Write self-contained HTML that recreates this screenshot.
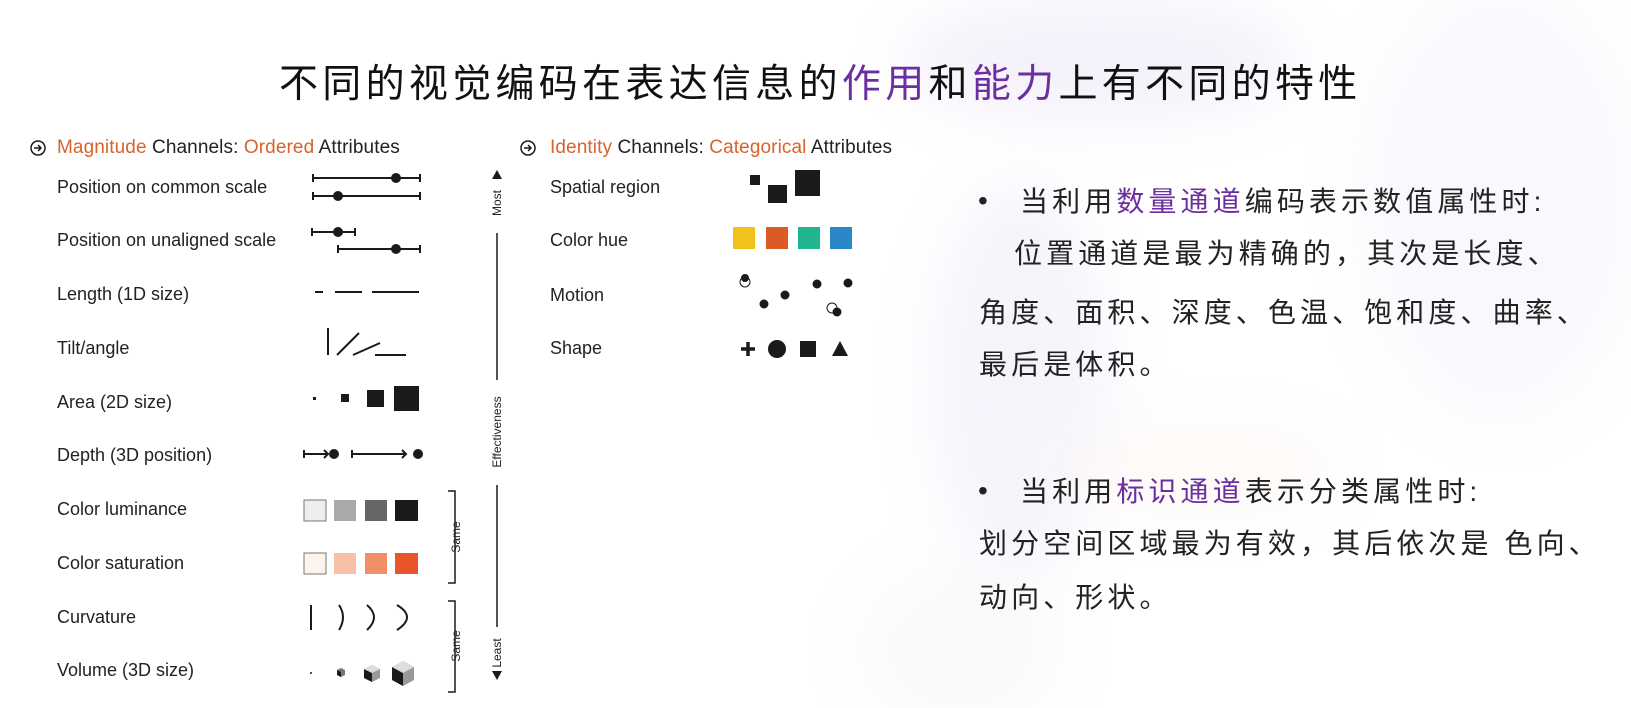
<!DOCTYPE html>
<html><head><meta charset="utf-8"><style>
html,body{margin:0;padding:0}
body{width:1631px;height:708px;position:relative;overflow:hidden;background:#fff;font-family:"Liberation Sans","Noto Sans CJK SC",sans-serif}
.bg{position:absolute;left:0;top:0;width:1631px;height:708px}
.t{position:absolute;white-space:nowrap}
.title{left:279px;top:53px;font-size:39px;color:#111;letter-spacing:4.3px}
.p{color:#6b2fa0}
.o{color:#d9622b}
.lab{font-size:18px;color:#222;left:57px}
.hd{font-size:19px;color:#222;letter-spacing:0.1px}
.cn{font-size:28px;color:#222;letter-spacing:4.1px}
</style></head><body>
<svg class="bg" viewBox="0 0 1631 708">
<defs>
<filter id="b" x="-50%" y="-50%" width="200%" height="200%"><feGaussianBlur stdDeviation="30"/></filter>
</defs>
<g filter="url(#b)" opacity="0.15">
<ellipse cx="1100" cy="60" rx="200" ry="60" fill="#b9a3e0"/>
<ellipse cx="1020" cy="380" rx="90" ry="200" fill="#c8b6ea"/>
<ellipse cx="1500" cy="200" rx="140" ry="220" fill="#ddd4f0"/>
<ellipse cx="1200" cy="470" rx="140" ry="40" fill="#f3d8c8"/>
<ellipse cx="960" cy="650" rx="100" ry="80" fill="#ddd"/>
</g>
<g stroke="#1a1a1a" stroke-width="2" fill="#1a1a1a">
<circle cx="38" cy="148" r="7" fill="none" stroke-width="1.5"/>
<path d="M34 148h7M38 145l3 3-3 3" fill="none" stroke-width="1.5"/>
<circle cx="528" cy="148" r="7" fill="none" stroke-width="1.5"/>
<path d="M524 148h7M528 145l3 3-3 3" fill="none" stroke-width="1.5"/>
<path d="M313 178h107M313 174v8M420 174v8M313 196h107M313 192v8M420 192v8M312 232h43M312 228v8M355 228v8M338 249h82M338 245v8M420 245v8" fill="none"/>
<circle cx="396" cy="178" r="4"/><circle cx="338" cy="196" r="4"/><circle cx="338" cy="232" r="4"/><circle cx="396" cy="249" r="4"/>
<path d="M315 292h8M335 292h27M372 292h47" fill="none"/>
<path d="M328 328v27M337 355l22-22M353 355l27-12M375 355h31" fill="none"/>
<rect x="313" y="397" width="3" height="3" stroke="none"/>
<rect x="341" y="394" width="8" height="8" stroke="none"/>
<rect x="367" y="390" width="17" height="17" stroke="none"/>
<rect x="394" y="386" width="25" height="25" stroke="none"/>
<path d="M304 450v8M304 454h24M324 450l4 4-4 4M352 450v8M352 454h54M402 450l4 4-4 4" fill="none"/>
<circle cx="334" cy="454" r="4"/><circle cx="418" cy="454" r="4"/>
<rect x="304" y="500" width="22" height="21" fill="#eeeeee" stroke="#777" stroke-width="1"/>
<rect x="334" y="500" width="22" height="21" fill="#aaaaaa" stroke="none"/>
<rect x="365" y="500" width="22" height="21" fill="#666" stroke="none"/>
<rect x="395" y="500" width="23" height="21" fill="#1a1a1a" stroke="none"/>
<rect x="304" y="553" width="22" height="21" fill="#fdf3ee" stroke="#777" stroke-width="1"/>
<rect x="334" y="553" width="22" height="21" fill="#f8c0a6" stroke="none"/>
<rect x="365" y="553" width="22" height="21" fill="#f08f68" stroke="none"/>
<rect x="395" y="553" width="23" height="21" fill="#e8552a" stroke="none"/>
<path d="M311 605v25M339 605q8 12 0 25M367 605q14 12 0 25M397 605q20 12 0 25" fill="none"/>
<rect x="310" y="672" width="2" height="2" stroke="none" fill="#555"/>
<path d="M337 670l4-2 4 2v5l-4 2-4-2z" stroke="none" fill="#777"/><path d="M337 670l4 2v5l-4-2z" stroke="none"/>
<path d="M364 669l8-4 8 4v9l-8 4-8-4z" stroke="none" fill="#999"/><path d="M364 669l8 4v9l-8-4z" stroke="none"/><path d="M364 669l8-4 8 4-8 4z" stroke="none" fill="#ddd"/>
<path d="M392 667l11-6 11 6v13l-11 6-11-6z" stroke="none" fill="#999"/><path d="M392 667l11 6v13l-11-6z" stroke="none"/><path d="M392 667l11-6 11 6-11 6z" stroke="none" fill="#ddd"/>
<path d="M448 491h7v92h-7M448 601h7v91h-7" fill="none" stroke-width="1.5"/>
<path d="M497 170l-5 9h10z" stroke="none"/>
<path d="M497 680l-5-9h10z" stroke="none"/>
<path d="M497 233v147M497 485v142" fill="none" stroke-width="1.5"/>
<rect x="750" y="175" width="10" height="10" stroke="none"/>
<rect x="768" y="185" width="19" height="18" stroke="none"/>
<rect x="795" y="170" width="25" height="26" stroke="none"/>
<rect x="733" y="227" width="22" height="22" fill="#f2c21a" stroke="none"/>
<rect x="766" y="227" width="22" height="22" fill="#dc5a24" stroke="none"/>
<rect x="798" y="227" width="22" height="22" fill="#1fb58f" stroke="none"/>
<rect x="830" y="227" width="22" height="22" fill="#2a87c8" stroke="none"/>
<circle cx="745" cy="282" r="5" fill="none" stroke-width="1"/><circle cx="745" cy="278" r="3"/>
<circle cx="764" cy="304" r="3.5"/><circle cx="785" cy="295" r="3.5"/><circle cx="817" cy="284" r="3.5"/><circle cx="848" cy="283" r="3.5"/>
<circle cx="832" cy="308" r="5" fill="none" stroke-width="1"/><circle cx="837" cy="312" r="3.5"/>
<path d="M741 349h14M748 342v14" fill="none" stroke-width="3.5"/>
<circle cx="777" cy="349" r="8"/>
<rect x="800" y="341" width="16" height="16" stroke="none"/>
<path d="M840 341l8 15h-16z" stroke="none"/>
</g>
<g font-family="Liberation Sans,sans-serif" font-size="12" fill="#222">
<text transform="translate(460,537) rotate(-90)" text-anchor="middle">Same</text>
<text transform="translate(460,646) rotate(-90)" text-anchor="middle">Same</text>
<text transform="translate(501,203) rotate(-90)" text-anchor="middle">Most</text>
<text transform="translate(501,432) rotate(-90)" text-anchor="middle">Effectiveness</text>
<text transform="translate(501,653) rotate(-90)" text-anchor="middle">Least</text>
</g>
</svg>

<div class="t title">不同的视觉编码在表达信息的<span class="p">作用</span>和<span class="p">能力</span>上有不同的特性</div>

<div class="t hd" style="left:57px;top:137px"><span class="o">Magnitude</span> Channels: <span class="o">Ordered</span> Attributes</div>
<div class="t lab" style="top:177px">Position on common scale</div>
<div class="t lab" style="top:230px">Position on unaligned scale</div>
<div class="t lab" style="top:284px">Length (1D size)</div>
<div class="t lab" style="top:338px">Tilt/angle</div>
<div class="t lab" style="top:392px">Area (2D size)</div>
<div class="t lab" style="top:445px">Depth (3D position)</div>
<div class="t lab" style="top:499px">Color luminance</div>
<div class="t lab" style="top:553px">Color saturation</div>
<div class="t lab" style="top:607px">Curvature</div>
<div class="t lab" style="top:660px">Volume (3D size)</div>

<div class="t hd" style="left:550px;top:137px"><span class="o">Identity</span> Channels: <span class="o">Categorical</span> Attributes</div>
<div class="t lab" style="left:550px;top:177px">Spatial region</div>
<div class="t lab" style="left:550px;top:230px">Color hue</div>
<div class="t lab" style="left:550px;top:285px">Motion</div>
<div class="t lab" style="left:550px;top:338px">Shape</div>

<div class="t cn" style="left:978px;top:185px">•</div>
<div class="t cn" style="left:1020px;top:180px">当利用<span class="p">数量通道</span>编码表示数值属性时:</div>
<div class="t cn" style="left:1014px;top:232px">位置通道是最为精确的，其次是长度、</div>
<div class="t cn" style="left:979px;top:291px">角度、面积、深度、色温、饱和度、曲率、</div>
<div class="t cn" style="left:979px;top:343px">最后是体积。</div>
<div class="t cn" style="left:978px;top:475px">•</div>
<div class="t cn" style="left:1020px;top:470px">当利用<span class="p">标识通道</span>表示分类属性时:</div>
<div class="t cn" style="left:979px;top:522px">划分空间区域最为有效，其后依次是 色向、</div>
<div class="t cn" style="left:979px;top:576px">动向、形状。</div>
</body></html>
